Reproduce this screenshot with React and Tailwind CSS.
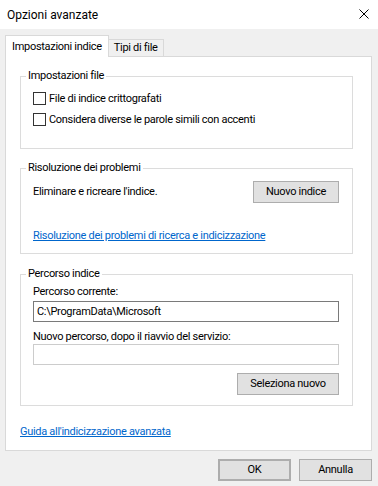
import React, { useState } from "react";

function Checkbox({ label }) {
  const [checked, setChecked] = useState(false);
  return (
    <label className="flex h-[21px] items-center gap-[3px] cursor-default">
      <span
        onClick={() => setChecked(!checked)}
        className="flex h-[13px] w-[13px] items-center justify-center border border-[#333333] bg-white"
      >
        {checked && (
          <svg width="9" height="9" viewBox="0 0 9 9">
            <path d="M1 4.5 L3.5 7 L8 1.5" fill="none" stroke="#000" strokeWidth="1.3" />
          </svg>
        )}
      </span>
      <span>{label}</span>
    </label>
  );
}

function WinButton({ children, className = "" }) {
  return (
    <button
      className={`flex h-[22px] items-center justify-center border border-[#adadad] bg-[#e1e1e1] text-black ${className}`}
    >
      {children}
    </button>
  );
}

function Group({ title, className = "", children }) {
  return (
    <fieldset className={`w-[333px] border border-[#dcdcdc] ${className}`}>
      <legend className="ml-[5px] px-[2px] leading-[16px]">{title}</legend>
      {children}
    </fieldset>
  );
}

export default function App() {
  return (
    <div className="flex h-[486px] w-[378px] flex-col bg-[#f0f0f0] font-['Roboto',sans-serif] text-[11px] tracking-[-0.3px] leading-[16px] text-black">
      {/* title bar */}
      <div className="flex h-[29px] items-center justify-between bg-white pl-[7px] pr-[9px]">
        <span className="text-[12px] tracking-normal">Opzioni avanzate</span>
        <svg width="10" height="10" viewBox="0 0 10 10" className="-mt-[2px]">
          <path d="M0.5 0.5 L9.5 9.5 M9.5 0.5 L0.5 9.5" stroke="#000" strokeWidth="1" />
        </svg>
      </div>

      {/* tabs */}
      <div className="mt-[6px] flex items-end pl-[5px]">
        <div className="relative z-10 -mb-px flex h-[22px] items-center border border-b-0 border-[#d9d9d9] bg-white px-[6px]">
          Impostazioni indice
        </div>
        <div className="-ml-px flex h-[17px] items-center border border-b-0 border-[#d9d9d9] bg-[#f0f0f0] px-[5px]">
          Tipi di file
        </div>
      </div>

      {/* tab panel */}
      <div className="ml-[5px] flex h-[395px] w-[367px] flex-col border border-[#d9d9d9] bg-white pl-[14px]">
        <Group title="Impostazioni file" className="mt-[11px] h-[81px]">
          <div className="pl-[12px] pt-[4px]">
            <Checkbox label="File di indice crittografati" />
            <Checkbox label="Considera diverse le parole simili con accenti" />
          </div>
        </Group>

        <Group title="Risoluzione dei problemi" className="mt-[11px] h-[94px]">
          <div className="pl-[12px] pr-[13px] pt-[5px]">
            <div className="flex items-center justify-between">
              <span>Eliminare e ricreare l'indice.</span>
              <WinButton className="w-[86px]">Nuovo indice</WinButton>
            </div>
            <a href="#" className="mt-[25px] block text-[#0066cc] underline">
              Risoluzione dei problemi di ricerca e indicizzazione
            </a>
          </div>
        </Group>

        <Group title="Percorso indice" className="mt-[12px] h-[140px]">
          <div className="flex flex-col pl-[12px] pr-[13px] pt-[3px]">
            <span className="leading-[14px]">Percorso corrente:</span>
            <input
              readOnly
              value="C:\ProgramData\Microsoft"
              className="mt-[2px] h-[21px] w-[306px] border border-[#7a7a7a] bg-white px-[3px] outline-none"
            />
            <span className="mt-[8px] leading-[14px]">Nuovo percorso, dopo il riavvio del servizio:</span>
            <input
              readOnly
              value=""
              className="h-[21px] w-[306px] border border-[#cccccc] bg-white px-[3px] outline-none"
            />
            <div className="mt-[8px] flex justify-end">
              <WinButton className="w-[102px]">Seleziona nuovo</WinButton>
            </div>
          </div>
        </Group>

        <a href="#" className="mt-[18px] self-start text-[#0066cc] underline">
          Guida all'indicizzazione avanzata
        </a>
      </div>

      {/* dialog buttons */}
      <div className="mt-[8px] flex justify-end gap-[8px] pr-[6px]">
        <WinButton className="w-[73px] border-2 border-[#0078d7]">OK</WinButton>
        <WinButton className="w-[73px]">Annulla</WinButton>
      </div>
    </div>
  );
}
